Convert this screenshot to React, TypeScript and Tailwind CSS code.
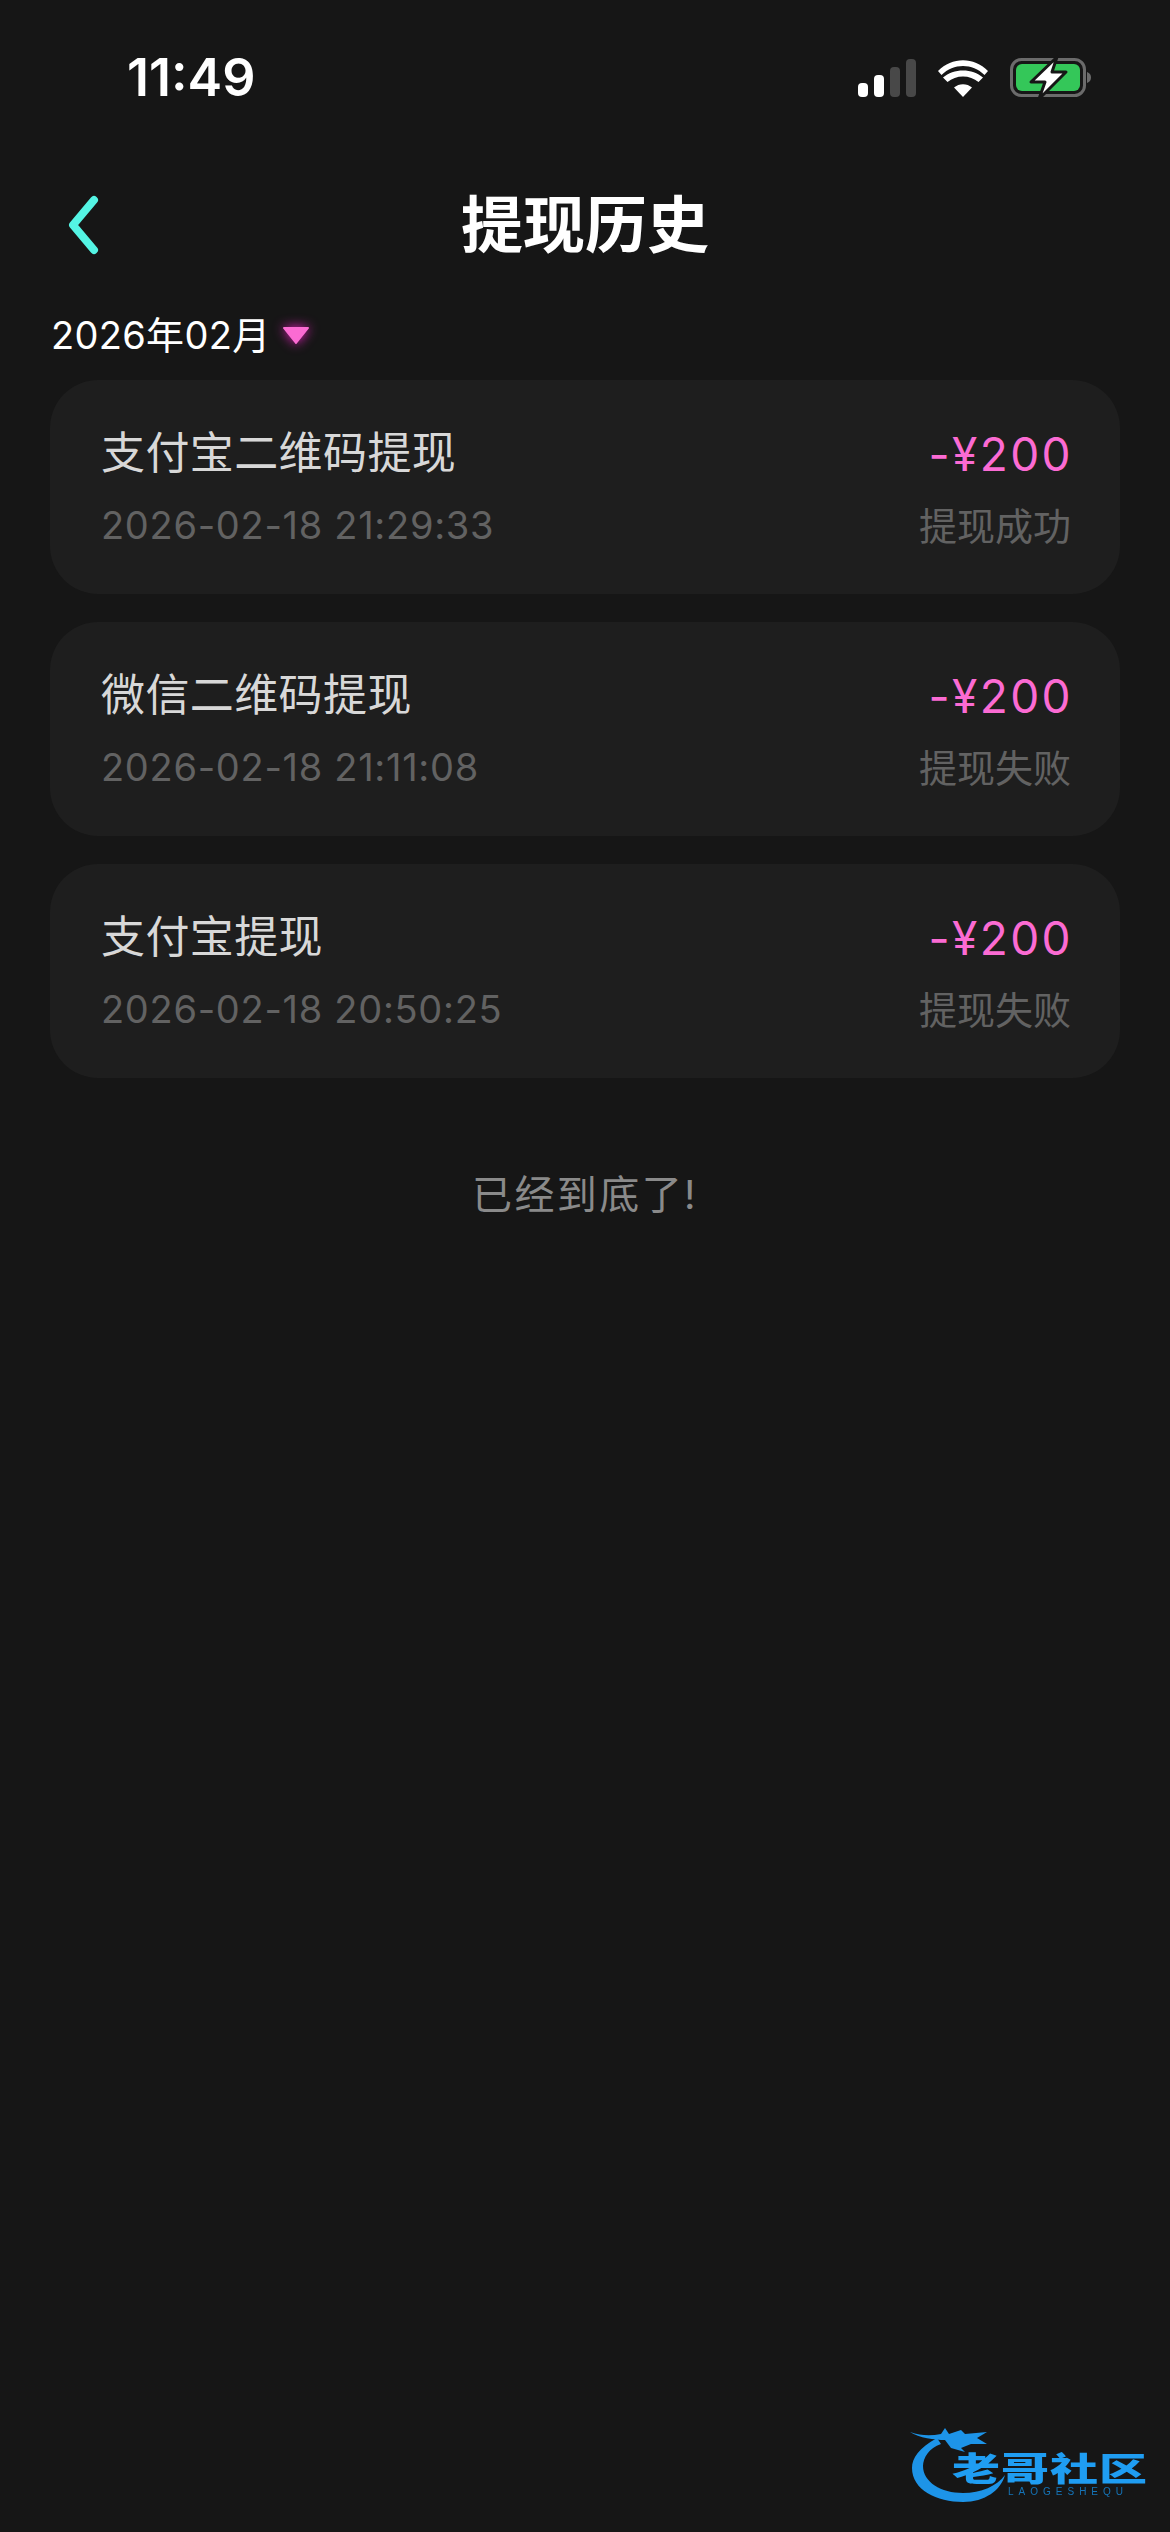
import React from 'react'

const records = [
  { title: '支付宝二维码提现', time: '2026-02-18 21:29:33', status: '提现成功' },
  { title: '微信二维码提现', time: '2026-02-18 21:11:08', status: '提现失败' },
  { title: '支付宝提现', time: '2026-02-18 20:50:25', status: '提现失败' },
]

const cjk = "font-['Inter','Noto_Sans_CJK_SC',sans-serif]"

const StatusIcons = () => (
  <div className="flex items-center gap-[22px]">
    <svg width="58" height="38" viewBox="0 0 58 38">
      <rect x="0" y="24" width="10" height="14" rx="4" fill="#fff" />
      <rect x="16" y="16" width="10" height="22" rx="4" fill="#fff" />
      <rect x="32" y="8" width="10" height="30" rx="4" fill="#484848" />
      <rect x="48" y="0" width="10" height="38" rx="4" fill="#484848" />
    </svg>
    <svg width="50" height="38" viewBox="0 0 50 38">
      <path d="M25 38 L16 28.500 C21 24 29 24 34 28.500 Z" fill="#fff" />
      <path d="M9.500 22 L5 17.500 C15.500 8 34.500 8 45 17.500 L40.500 22 C32 14.500 18 14.500 9.500 22 Z" fill="#fff" transform="translate(0 1)" />
      <path d="M3.500 15 L0 11 C14 -3.500 36 -3.500 50 11 L46.500 15 C34.500 3 15.500 3 3.500 15 Z" fill="#fff" transform="translate(0 1)" />
    </svg>
    <svg className="overflow-visible" width="82" height="42" viewBox="0 0 82 42">
      <rect x="1.500" y="2.500" width="73" height="36" rx="10" fill="none" stroke="#6b6b6b" strokeWidth="3" />
      <rect x="6" y="7" width="64" height="27" rx="6" fill="#34c759" />
      <path d="M77 15 C80 16 81 18 81 20.500 C81 23 80 25 77 26 Z" fill="#6b6b6b" />
      <path d="M47 0 L21 25 L35 25 L29 42 L56 15 L42 15 Z" fill="#fff" stroke="#161616" strokeWidth="3" strokeLinejoin="round" />
    </svg>
  </div>
)

const WatermarkLogo = () => (
  <div className="absolute right-[15px] bottom-[27px] h-[85px] w-[250px] blur-[0.6px]">
    <svg className="absolute left-0 top-0" width="110" height="85" viewBox="0 0 110 85">
      <path d="M32 18 C14 28 7 38 7 48 C7 70 32 82 58 82 C80 82 96 70 100 55 C92 66 76 73 58 73 C36 73 18 62 18 46 C18 38 24 28 36 24 Z" fill="#1d94e8" />
      <path d="M5 12 C16 16 26 16 36 14 L40 8 L44 14 L56 10 L60 14 L82 12 L72 18 L82 24 L66 24 L56 28 L60 32 L46 28 L40 20 C30 20 14 18 5 12 Z" fill="#1d94e8" />
    </svg>
    <div className="absolute left-[47px] top-[32px] origin-center scale-y-[0.68] whitespace-nowrap text-[48px] leading-[30px] font-black tracking-[1px] text-[#1f9df2] font-['Noto_Sans_CJK_SC',sans-serif]">
      老哥社区
    </div>
    <div className="absolute left-[103px] top-[66px] whitespace-nowrap text-[10px] leading-[12px] tracking-[5px] text-[#1574b8] font-['Liberation_Sans',sans-serif]">
      LAOGESHEQU
    </div>
  </div>
)

const App = () => {
  return (
    <div className={`relative h-[2532px] w-[1170px] overflow-hidden bg-[#161616] ${cjk}`}>
      <div className="flex h-[156px] items-center justify-between pl-[127px] pr-[78px]">
        <span className="text-[52px] font-semibold leading-none text-white font-['Inter',sans-serif]">11:49</span>
        <StatusIcons />
      </div>

      <div className="relative flex h-[140px] items-center justify-center">
        <svg className="absolute left-[68px] top-[39px]" width="32" height="60" viewBox="0 0 32 60">
          <path d="M26 5 L5 30 L26 55" fill="none" stroke="#54f4e4" strokeWidth="8" strokeLinecap="round" strokeLinejoin="round" />
        </svg>
        <h1 className="text-[62px] font-bold leading-none text-white">提现历史</h1>
      </div>

      <div className="mt-[15px] flex h-[48px] items-center pl-[51px]">
        <span className="text-[38px] tracking-[0.300px] leading-none text-white">2026年02月</span>
        <svg className="ml-[13px] mt-[2px] overflow-visible" width="26" height="20" viewBox="0 0 26 20">
          <path d="M1 2 L25 2 L13 17 Z" fill="#fb6bd3" stroke="#fb6bd3" strokeWidth="2" strokeLinejoin="round" className="drop-shadow-[0_0_6px_#e81fc0]" />
        </svg>
      </div>

      <div className="mt-[21px] flex flex-col gap-[28px] px-[50px]">
        {records.map((item) => (
          <div key={item.time} className="flex h-[214px] items-start justify-between rounded-[48px] bg-[#1e1e1e] pl-[51px] pr-[49px] pt-[48px]">
            <div className="flex flex-col">
              <span className="text-[44px] tracking-[0.400px] leading-[50px] text-[#d8d8d8]">{item.title}</span>
              <span className="mt-[25px] text-[38px] tracking-[0.700px] leading-[44px] text-[#626262]">{item.time}</span>
            </div>
            <div className="flex flex-col items-end">
              <span className="-mr-[2px] text-[46px] tracking-[2.400px] leading-[52px] text-[#fb6bd3]">-¥200</span>
              <span className="mt-[24px] text-[38px] leading-[44px] text-[#626262]">{item.status}</span>
            </div>
          </div>
        ))}
      </div>

      <p className="mt-[92px] text-center text-[40px] leading-[50px] tracking-[2.400px] text-[#8a8a8a]">已经到底了!</p>

      <WatermarkLogo />
    </div>
  )
}

export default App
